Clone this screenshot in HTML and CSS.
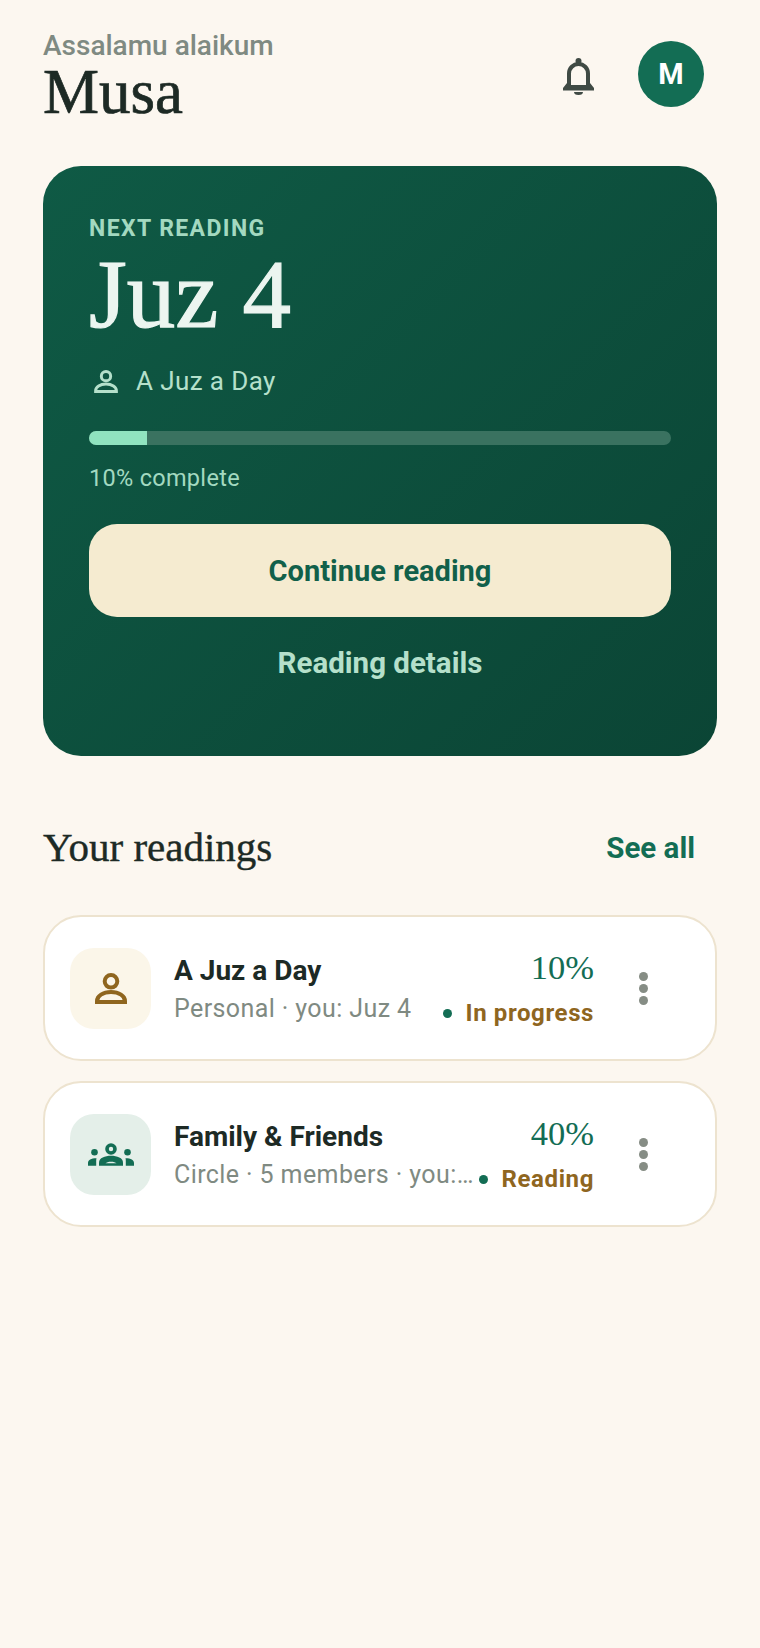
FILE: index.html
```html
<!DOCTYPE html>
<html lang="en">

<head>
    <meta charset="UTF-8">
    <meta name="viewport" content="width=device-width, initial-scale=1.0">
    <title>Home</title>
    <link rel="stylesheet" href="styles.css">
</head>

<body>
    <div class="page">
        <header class="top">
            <div class="hello">
                <p class="hello-line">Assalamu alaikum</p>
                <h1 class="hello-name">Musa</h1>
            </div>
            <svg class="bell" viewBox="0 0 33 39" fill="#3f4a44">
                <circle cx="16.5" cy="4" r="3" />
                <path d="M7 29V16.5a9.5 9.5 0 0 1 19 0V29" fill="none" stroke="#3f4a44" stroke-width="4" />
                <path d="M5 26L1 31v2.500h31V31l-4-5-4 2H9z" />
                <path d="M12 35h9a4.500 3 0 0 1-9 0z" />
            </svg>
            <div class="avatar">M</div>
        </header>

        <section class="hero">
            <p class="hero-label">NEXT READING</p>
            <h2 class="hero-title">Juz 4</h2>
            <div class="hero-plan">
                <svg class="hero-icon" viewBox="0 0 32 31" fill="none" stroke="#b5e0cb" stroke-width="4">
                    <circle cx="16" cy="8.3" r="6.3" />
                    <path d="M2 29v-1c0-5 6-9 14-9s14 4 14 9v1z" />
                </svg>
                <span>A Juz a Day</span>
            </div>
            <div class="bar">
                <div class="bar-fill" style="width: 10%"></div>
            </div>
            <p class="bar-text">10% complete</p>
            <button class="btn-main">Continue reading</button>
            <button class="btn-link">Reading details</button>
        </section>

        <div class="section-head">
            <h2 class="section-title">Your readings</h2>
            <a class="see-all">See all</a>
        </div>

        <div class="list">
            <div class="item">
                <div class="tile tile-gold">
                    <svg class="tile-icon" viewBox="0 0 32 31" fill="none" stroke="#8f661f" stroke-width="4">
                        <circle cx="16" cy="8.3" r="6.3" />
                        <path d="M2 29v-1c0-5 6-9 14-9s14 4 14 9v1z" />
                    </svg>
                </div>
                <div class="item-text">
                    <div class="item-name">A Juz a Day</div>
                    <div class="item-sub">Personal · you: Juz 4</div>
                </div>
                <div class="item-state">
                    <div class="item-pct">10%</div>
                    <div class="item-status"><span class="dot"></span>In progress</div>
                </div>
                <div class="more"><span></span><span></span><span></span></div>
            </div>

            <div class="item">
                <div class="tile tile-green">
                    <svg class="tile-icon-wide" viewBox="0 0 46 23" fill="#136d54">
                        <circle cx="6.500" cy="9.300" r="3.300" />
                        <circle cx="39.500" cy="9.300" r="3.300" />
                        <circle cx="23" cy="6" r="4" fill="none" stroke="#136d54" stroke-width="3.600" />
                        <path d="M11 22.700v-3c0-5 6-7 12-7s12 2 12 7v3z" />
                        <path d="M0 22.700V20c0-2.800 3-4.700 8.500-4.700-.3 1-.3 2-.3 3.400v4z" />
                        <path d="M46 22.700V20c0-2.800-3-4.700-8.500-4.700.3 1 .3 2 .3 3.400v4z" />
                        <path d="M17.500 20.300c1-1 3-1.600 5.500-1.600s4.500.6 5.500 1.600z" fill="#e4efe9" />
                    </svg>
                </div>
                <div class="item-text">
                    <div class="item-name">Family &amp; Friends</div>
                    <div class="item-sub">Circle · 5 members · you:…</div>
                </div>
                <div class="item-state">
                    <div class="item-pct">40%</div>
                    <div class="item-status"><span class="dot"></span>Reading</div>
                </div>
                <div class="more"><span></span><span></span><span></span></div>
            </div>
        </div>
    </div>
</body>

</html>
```

FILE: styles.css
```css
* {
    box-sizing: border-box;
}

body {
    margin: 0;
    background-color: #fcf7f0;
    font-family: Roboto, sans-serif;
    color: #1d2a25;
}

p,
h1,
h2 {
    margin: 0;
}

.page {
    padding: 30px 43px 0;
    min-height: 1648px;
}

.top {
    display: flex;
    align-items: center;
    height: 88px;
}

.hello {
    flex: 1;
}

.hello-line {
    margin-top: 4px;
    font-size: 28px;
    font-weight: 500;
    line-height: 30px;
    color: #7f8a82;
}

.hello-name {
    margin-top: 1px;
    font-family: "Liberation Serif", serif;
    font-size: 63px;
    font-weight: 400;
    line-height: 60px;
    -webkit-text-stroke: 0.7px #1d2a25;
}

.bell {
    width: 33px;
    height: 39px;
    margin-top: 4px;
    margin-right: 43px;
}

.avatar {
    width: 66px;
    height: 66px;
    margin-right: 13px;
    border-radius: 50%;
    background-color: #136d54;
    color: #fff;
    font-size: 29px;
    font-weight: 700;
    display: flex;
    align-items: center;
    justify-content: center;
}

.hero {
    margin-top: 48px;
    padding: 50px 46px 47px;
    border-radius: 38px;
    background: linear-gradient(135deg, #0f5a45, #0b4535);
}

.hero-label {
    font-size: 23px;
    font-weight: 700;
    line-height: 26px;
    letter-spacing: 1.4px;
    color: #a3d9c0;
}

.hero-title {
    margin-top: 5px;
    font-family: "Liberation Serif", serif;
    font-size: 97px;
    font-weight: 400;
    line-height: 96px;
    color: #ecf5f0;
    -webkit-text-stroke: 1.2px #ecf5f0;
}

.hero-plan {
    display: flex;
    align-items: center;
    margin-top: 22px;
    font-size: 26px;
    line-height: 32px;
    letter-spacing: 0.4px;
    color: #b5e0cb;
}

.hero-icon {
    width: 24px;
    height: 23px;
    margin: 0 18px 0 5px;
}

.bar {
    height: 14px;
    margin-top: 34px;
    border-radius: 7px;
    background-color: #3a7260;
    overflow: hidden;
}

.bar-fill {
    height: 100%;
    background-color: #90e3bf;
}

.bar-text {
    margin-top: 18px;
    font-size: 23.5px;
    line-height: 30px;
    letter-spacing: 0.3px;
    color: #a3d9c0;
}

.btn-main,
.btn-link {
    display: block;
    width: 100%;
    border: 0;
    font-family: inherit;
    font-size: 29px;
    font-weight: 700;
}

.btn-main {
    height: 93px;
    margin-top: 31px;
    border-radius: 28px;
    background-color: #f5ebd0;
    color: #11604a;
}

.btn-link {
    height: 92px;
    background: none;
    font-size: 29.5px;
    color: #b5e0cb;
}

.section-head {
    display: flex;
    align-items: center;
    justify-content: space-between;
    margin-top: 66px;
    padding-right: 22px;
    height: 50px;
}

.section-title {
    font-family: "Liberation Serif", serif;
    font-size: 41px;
    font-weight: 400;
    -webkit-text-stroke: 0.4px #1d2a25;
}

.see-all {
    padding-top: 2px;
    font-size: 29.5px;
    font-weight: 700;
    color: #136d54;
}

.list {
    display: flex;
    flex-direction: column;
    gap: 20px;
    margin-top: 43px;
}

.item {
    display: flex;
    align-items: center;
    height: 146px;
    padding: 0 25px;
    border: 2px solid #ede3cf;
    border-radius: 38px;
    background-color: #fff;
}

.tile {
    flex: none;
    width: 81px;
    height: 81px;
    margin-right: 23px;
    border-radius: 24px;
    display: flex;
    align-items: center;
    justify-content: center;
}

.tile-gold {
    background-color: #fbf6e9;
}

.tile-green {
    background-color: #e4efe9;
}

.tile-icon {
    width: 32px;
    height: 31px;
}

.tile-icon-wide {
    width: 46px;
    height: 23px;
}

.item-text {
    flex: 1;
    min-width: 0;
    padding-top: 3px;
}

.item-name {
    font-size: 28px;
    font-weight: 700;
    line-height: 34px;
}

.item-sub {
    margin-top: 5px;
    font-size: 25px;
    line-height: 32px;
    letter-spacing: 0.4px;
    color: #7f8a82;
    white-space: nowrap;
}

.item-state {
    flex: none;
    text-align: right;
}

.item-pct {
    font-family: "Liberation Serif", serif;
    font-size: 34.5px;
    line-height: 38px;
    color: #136d54;
}

.item-status {
    display: flex;
    align-items: center;
    justify-content: flex-end;
    margin-top: 12px;
    font-size: 24px;
    font-weight: 700;
    line-height: 30px;
    letter-spacing: 0.6px;
    color: #8f661f;
}

.dot {
    width: 9px;
    height: 9px;
    margin-right: 14px;
    border-radius: 50%;
    background-color: #136d54;
}

.more {
    flex: none;
    display: flex;
    flex-direction: column;
    gap: 3px;
    margin-left: 45px;
    margin-right: 42px;
}

.more span {
    width: 9px;
    height: 9px;
    border-radius: 50%;
    background-color: #868d85;
}
```
